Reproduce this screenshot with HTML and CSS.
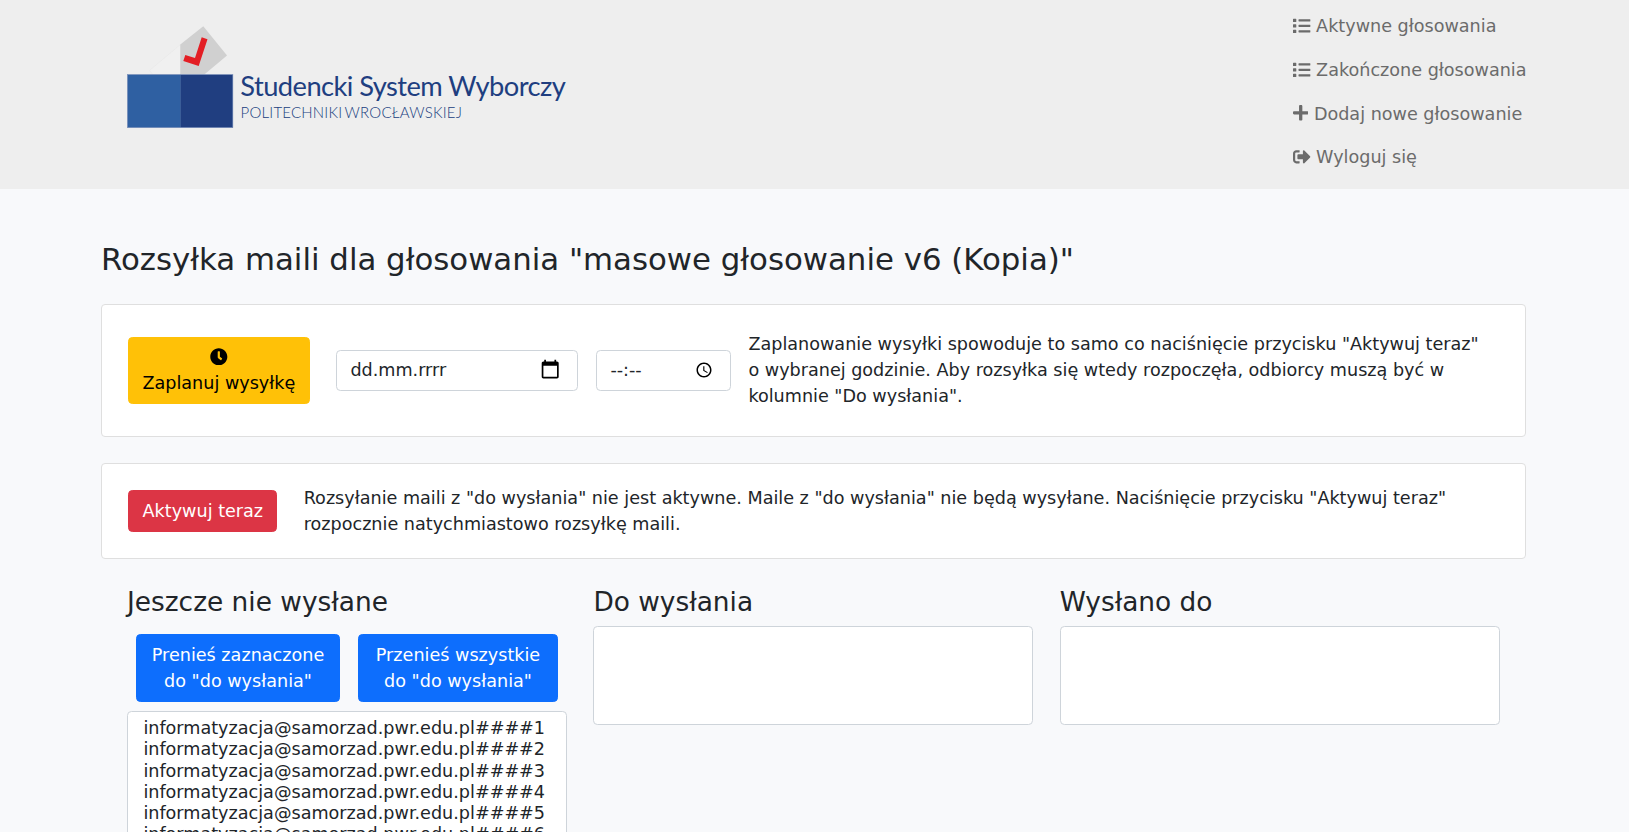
FILE: index.html
```html
<!DOCTYPE html>
<html lang="pl">
<head>
<meta charset="utf-8">
<title>Studencki System Wyborczy</title>
<link rel="stylesheet" href="styles.css">
</head>
<body>
<svg class="sprite" width="0" height="0" aria-hidden="true">
  <symbol id="list" viewBox="0 0 512 512"><path d="M80 368H16a16 16 0 0 0-16 16v64a16 16 0 0 0 16 16h64a16 16 0 0 0 16-16v-64a16 16 0 0 0-16-16zm0-320H16A16 16 0 0 0 0 64v64a16 16 0 0 0 16 16h64a16 16 0 0 0 16-16V64a16 16 0 0 0-16-16zm0 160H16a16 16 0 0 0-16 16v64a16 16 0 0 0 16 16h64a16 16 0 0 0 16-16v-64a16 16 0 0 0-16-16zm416 176H176a16 16 0 0 0-16 16v32a16 16 0 0 0 16 16h320a16 16 0 0 0 16-16v-32a16 16 0 0 0-16-16zm0-320H176a16 16 0 0 0-16 16v32a16 16 0 0 0 16 16h320a16 16 0 0 0 16-16V80a16 16 0 0 0-16-16zm0 160H176a16 16 0 0 0-16 16v32a16 16 0 0 0 16 16h320a16 16 0 0 0 16-16v-32a16 16 0 0 0-16-16z"/></symbol>
</svg>
<header class="header">
  <div class="container header-inner">
    <svg class="logo" width="470" height="140" viewBox="110 10 470 140" role="img" aria-label="Studencki System Wyborczy">
      <path d="M180.500 44.500L149.500 70.500L153 74.700H180.500Z" fill="#f0f0f0" stroke="#e2e2e2" stroke-width=".4"/>
      <path d="M180.300 44.500L203.300 26.300L227 55.400L204 74.700H180.300Z" fill="#d0d0d0"/>
      <path d="M201.700 37.300L207.500 39.300L198.700 66L183.300 61L185.300 55L195 57.900Z" fill="#e31e24"/>
      <rect x="127.300" y="74.500" width="53.500" height="53.300" fill="#2f60a2"/>
      <rect x="180.500" y="74.500" width="52.500" height="53.300" fill="#203e80"/>
      <rect x="127.500" y="74.500" width="105.300" height="53" fill="none" stroke="#8095bd" stroke-width=".7"/>
      <text class="logo-name" x="240.300" y="95.700" textLength="325.500">Studencki System Wyborczy</text>
      <text class="logo-sub" x="240.600" y="117.700" textLength="101.500">POLITECHNIKI</text>
      <text class="logo-sub" x="344.500" y="117.700" textLength="117.500">WROCŁAWSKIEJ</text>
    </svg>
    <nav class="nav">
      <a class="nav-link"><svg class="icon"><use href="#list"/></svg> Aktywne głosowania</a>
      <a class="nav-link"><svg class="icon"><use href="#list"/></svg> Zakończone głosowania</a>
      <a class="nav-link"><svg class="icon icon-plus" viewBox="0 0 448 512"><path d="M416 208H272V64c0-17.670-14.330-32-32-32h-32c-17.670 0-32 14.330-32 32v144H32c-17.670 0-32 14.330-32 32v32c0 17.670 14.330 32 32 32h144v144c0 17.670 14.330 32 32 32h32c17.670 0 32-14.330 32-32V304h144c17.670 0 32-14.330 32-32v-32c0-17.670-14.330-32-32-32z"/></svg> Dodaj nowe głosowanie</a>
      <a class="nav-link"><svg class="icon" viewBox="0 0 512 512"><path d="M497 273L329 441c-15 15-41 4.500-41-17v-96H152c-13.300 0-24-10.700-24-24v-96c0-13.300 10.700-24 24-24h136V88c0-21.400 25.900-32 41-17l168 168c9.300 9.400 9.300 24.600 0 34zM192 436v-40c0-6.600-5.400-12-12-12H96c-17.700 0-32-14.300-32-32V160c0-17.700 14.300-32 32-32h84c6.600 0 12-5.400 12-12V76c0-6.600-5.400-12-12-12H96c-53 0-96 43-96 96v192c0 53 43 96 96 96h84c6.600 0 12-5.400 12-12z"/></svg> Wyloguj się</a>
    </nav>
  </div>
</header>
<main class="container main">
  <h1 class="title">Rozsyłka maili dla głosowania "masowe głosowanie v6 (Kopia)"</h1>

  <section class="card schedule">
    <button class="btn btn-warning"><svg class="icon" viewBox="0 0 512 512"><path d="M256,8C119,8,8,119,8,256S119,504,256,504,504,393,504,256,393,8,256,8Zm92.490,313h0l-20,25a16,16,0,0,1-22.490,2.500h0l-67-49.720a40,40,0,0,1-15-31.230V112a16,16,0,0,1,16-16h32a16,16,0,0,1,16,16V256l58,42.500A16,16,0,0,1,348.490,321Z"/></svg><br>Zaplanuj wysyłkę</button>
    <div class="field field-date"><span>dd.mm.rrrr</span><svg width="20.400" height="20.400" viewBox="0 0 24 24"><path d="M20 3h-1V1h-2v2H7V1H5v2H4c-1.100 0-2 .9-2 2v16c0 1.100.9 2 2 2h16c1.100 0 2-.9 2-2V5c0-1.100-.9-2-2-2zm0 18H4V8h16v13z"/></svg></div>
    <div class="field field-time"><span>--:--</span><svg width="18" height="18" viewBox="0 0 24 24"><path d="M11.990 2C6.470 2 2 6.480 2 12s4.470 10 9.990 10C17.520 22 22 17.520 22 12S17.520 2 11.990 2zM12 20c-4.420 0-8-3.580-8-8s3.580-8 8-8 8 3.580 8 8-3.580 8-8 8zm.5-13H11v6l5.250 3.150.75-1.230-4.500-2.670z"/></svg></div>
    <p class="note">Zaplanowanie wysyłki spowoduje to samo co naciśnięcie przycisku "Aktywuj teraz" o wybranej godzinie. Aby rozsyłka się wtedy rozpoczęła, odbiorcy muszą być w kolumnie "Do wysłania".</p>
  </section>

  <section class="card activate">
    <button class="btn btn-danger">Aktywuj teraz</button>
    <p class="note">Rozsyłanie maili z "do wysłania" nie jest aktywne. Maile z "do wysłania" nie będą wysyłane. Naciśnięcie przycisku "Aktywuj teraz" rozpocznie natychmiastowo rozsyłkę maili.</p>
  </section>

  <div class="columns">
    <section>
      <h2 class="column-title">Jeszcze nie wysłane</h2>
      <div class="actions">
        <button class="btn btn-primary">Prenieś zaznaczone<br>do "do wysłania"</button>
        <button class="btn btn-primary">Przenieś wszystkie<br>do "do wysłania"</button>
      </div>
      <ul class="listbox listbox-filled">
        <li>informatyzacja@samorzad.pwr.edu.pl####1</li>
        <li>informatyzacja@samorzad.pwr.edu.pl####2</li>
        <li>informatyzacja@samorzad.pwr.edu.pl####3</li>
        <li>informatyzacja@samorzad.pwr.edu.pl####4</li>
        <li>informatyzacja@samorzad.pwr.edu.pl####5</li>
        <li>informatyzacja@samorzad.pwr.edu.pl####6</li>
      </ul>
    </section>
    <section>
      <h2 class="column-title">Do wysłania</h2>
      <ul class="listbox"></ul>
    </section>
    <section>
      <h2 class="column-title">Wysłano do</h2>
      <ul class="listbox"></ul>
    </section>
  </div>
</main>
</body>
</html>
```
FILE: styles.css
```css
* { box-sizing: border-box; }

html { font-size: 17.6px; }

body {
  margin: 0;
  height: 832px;
  overflow: hidden;
  background: #f8f9fb;
  color: #212529;
  font-family: "DejaVu Sans", sans-serif;
  font-size: 1rem;
  line-height: 26px;
}

.sprite { display: block; }

.container {
  width: 1451px;
  margin: 0 auto 0 88px;
  padding: 0 13px;
}

.header {
  height: 189px;
  background: #eee;
}

.header-inner {
  display: flex;
  justify-content: space-between;
  align-items: flex-start;
}

.logo { margin: 10px 0 0 9px; }
.logo-name { font: 27.300px Lato, sans-serif; fill: #203e80; }
.logo-sub { font: 300 15px Lato, sans-serif; fill: #203e80; }

.nav {
  display: flex;
  flex-direction: column;
  margin-right: -.5px;
  padding-top: 4.700px;
}

.nav-link {
  padding: .5rem 0;
  color: #6b6b6b;
  white-space: nowrap;
}

.icon {
  width: 1em;
  height: 1em;
  fill: currentColor;
  vertical-align: -.125em;
}

.icon-plus { width: .875em; }

.title {
  margin: 0;
  padding-top: 52px;
  font-size: 1.75rem;
  font-weight: 400;
  line-height: 37px;
}

.card {
  display: flex;
  align-items: center;
  margin-top: 26px;
  padding: 0 1.5rem;
  background: #fff;
  border: 1px solid #dfdfdf;
  border-radius: 4px;
}

.schedule { height: 133px; }
.activate { height: 96px; }

.note { margin: 0; flex: 1; }
.schedule .note { margin-left: 17px; padding: 0 8px 2px 0; }
.activate .note { margin-left: 26.400px; }

.btn {
  padding: 6.600px 13.200px;
  border: 1px solid transparent;
  border-radius: 4.400px;
  font: inherit;
  text-align: center;
  white-space: nowrap;
}

.btn-warning {
  width: 182px;
  padding: 5.600px 1px 7.600px 0;
  background: #ffc107;
  color: #000;
  border-color: #ffc107;
}
.btn-warning .icon { vertical-align: -.17em; }
.btn-danger { background: #dc3545; color: #fff; border-color: #dc3545; }
.btn-primary { background: #0d6efd; color: #fff; border-color: #0d6efd; }

.field {
  display: flex;
  align-items: center;
  justify-content: space-between;
  height: 41px;
  padding: 0 17px 2px 13px;
  border: 1px solid #ced4da;
  border-radius: 4.400px;
}

.field svg { fill: #000; }
.field-date { width: 242px; margin-left: 26px; }
.field-time { width: 135px; margin-left: 18px; }

.columns {
  display: grid;
  grid-template-columns: repeat(3, 1fr);
  gap: 26.400px;
  padding: 27.400px 26.400px 0 26px;
}

.column-title {
  margin: 0 0 7.800px;
  font-size: 1.5rem;
  font-weight: 400;
  line-height: 32px;
}

.actions {
  display: flex;
  gap: 18px;
  padding: 8px 9px 9px;
}

.actions .btn { height: 68px; padding: 7px 0; }
.actions .btn:first-child { width: 204px; }
.actions .btn:last-child { width: 200px; }

.listbox {
  height: 99px;
  margin: 0;
  padding: 6px 13.200px;
  background: #fff;
  border: 1px solid #ced4da;
  border-radius: 4.400px;
  list-style: none;
}

.listbox-filled { height: 300px; }
.listbox li { padding: 0 2.200px; line-height: 21.200px; white-space: nowrap; }
```
